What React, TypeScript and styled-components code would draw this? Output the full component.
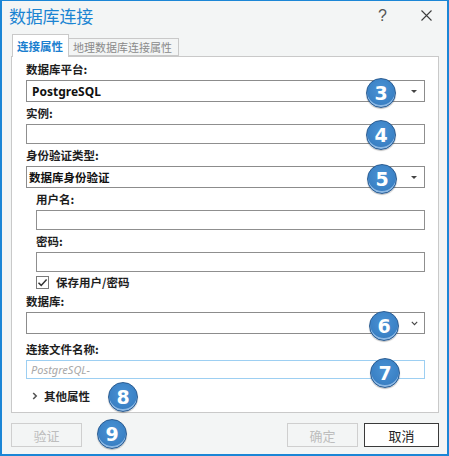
import React from 'react';
import styled, { createGlobalStyle } from 'styled-components';

const GlobalStyle = createGlobalStyle`
  html, body {
    margin: 0;
    padding: 0;
    background: #ffffff;
  }
  * { box-sizing: border-box; }
`

const cjk = `"Noto Sans CJK SC", "Noto Sans", sans-serif`
const latin = `"Noto Sans", "Noto Sans CJK SC", sans-serif`

// numbered callouts drawn over the dialog
const callouts = [
  { n: 3, x: 379, y: 92 },
  { n: 4, x: 379, y: 134 },
  { n: 5, x: 380, y: 178 },
  { n: 6, x: 382, y: 325 },
  { n: 7, x: 383, y: 372 },
  { n: 8, x: 121, y: 396 },
  { n: 9, x: 110, y: 433 },
]

const App = () => {
  return (
    <>
      <GlobalStyle />
      <Window>
        <TitleBar>
          <Title>数据库连接</Title>
          <TitleButtons>
            <Help>?</Help>
            <svg width="11" height="11" viewBox="0 0 11 11">
              <path d="M0.5 0.5 L10.5 10.5 M10.5 0.5 L0.5 10.5" stroke="#3c3c3c" strokeWidth="1.1" fill="none" />
            </svg>
          </TitleButtons>
        </TitleBar>

        <Tabs>
          <Tab $active>连接属性</Tab>
          <Tab>地理数据库连接属性</Tab>
        </Tabs>

        <Panel>
          <Label>数据库平台:</Label>
          <Combo>
            <span className='latin'>PostgreSQL</span>
            <Caret />
          </Combo>

          <Label>实例:</Label>
          <TextField />

          <Label>身份验证类型:</Label>
          <Combo $tight>
            <span>数据库身份验证</span>
            <Caret />
          </Combo>

          <Indent>
            <Label>用户名:</Label>
            <TextField />
            <Label>密码:</Label>
            <TextField />
            <CheckRow>
              <CheckBox>
                <svg width="11" height="11" viewBox="0 0 11 11">
                  <path d="M1.5 5.8 L4.2 8.4 L9.6 2.6" stroke="#333" strokeWidth="1.5" fill="none" />
                </svg>
              </CheckBox>
              <span>保存用户/密码</span>
            </CheckRow>
          </Indent>

          <Label>数据库:</Label>
          <Combo>
            <span />
            <svg width="7" height="5" viewBox="0 0 7 5">
              <path d="M0.8 0.8 L3.5 3.6 L6.2 0.8" stroke="#444" strokeWidth="1.1" fill="none" />
            </svg>
          </Combo>

          <Label $gap={6}>连接文件名称:</Label>
          <TextField $focus placeholder='PostgreSQL-' />

          <More>
            <svg width="6" height="8" viewBox="0 0 6 8">
              <path d="M1.2 1 L4.2 4 L1.2 7" stroke="#555" strokeWidth="1.6" fill="none" />
            </svg>
            <span>其他属性</span>
          </More>
        </Panel>

        <ButtonRow>
          <Button $width={71} disabled>验证</Button>
          <Spacer />
          <Button $width={71} disabled>确定</Button>
          <Button $width={75} $primary>取消</Button>
        </ButtonRow>

        {callouts.map(c => (
          <Badge key={c.n} style={{ left: c.x - 15, top: c.y - 15 }}>{c.n}</Badge>
        ))}
      </Window>
    </>
  )
}

const Window = styled.div`
  position: relative;
  width: 449px;
  height: 456px;
  background: #f3f5f5;
  border: 2px solid #1b86d6;
  border-top-width: 1px;
  display: flex;
  flex-direction: column;
  font-family: ${cjk};
  overflow: hidden;
`
const TitleBar = styled.div`
  height: 33px;
  display: flex;
  align-items: center;
  justify-content: space-between;
  padding: 0 15px 4px 7px;
`
const Title = styled.div`
  font-size: 17px;
  color: #1a84d2;
  letter-spacing: -0.2px;
`
const TitleButtons = styled.div`
  display: flex;
  align-items: center;
  gap: 34px;
  svg { display: block; }
`
const Help = styled.span`
  font-family: "Liberation Sans", sans-serif;
  font-size: 16px;
  color: #555;
`
const Tabs = styled.div`
  display: flex;
  align-items: flex-end;
  height: 22px;
  padding-left: 10px;
  position: relative;
  z-index: 1;
`
const Tab = styled.div<{ $active?: boolean }>`
  height: ${p => (p.$active ? 23 : 18)}px;
  margin-bottom: ${p => (p.$active ? -1 : 0)}px;
  padding: 0 ${p => (p.$active ? 5 : 6)}px 0 4px;
  display: flex;
  align-items: center;
  font-size: ${p => (p.$active ? 11.5 : 11)}px;
  font-weight: ${p => (p.$active ? 700 : 400)};
  color: ${p => (p.$active ? '#1b7fcf' : '#8a8a8a')};
  background: ${p => (p.$active ? '#ffffff' : '#f3f5f5')};
  border: 1px solid #c9c9c9;
  border-bottom: ${p => (p.$active ? 'none' : '1px solid #c9c9c9')};
  & + & { border-left: none; }
`
const Panel = styled.div`
  height: 357px;
  margin: 0 8px 0 9px;
  background: #ffffff;
  border: 1px solid #c9c9c9;
  padding: 1px 13px 0 14px;
  display: flex;
  flex-direction: column;
`
const Label = styled.div<{ $gap?: number }>`
  height: 18px;
  margin: ${p => p.$gap ?? 2}px 0 2px;
  display: flex;
  align-items: center;
  font-size: 11.5px;
  font-weight: 700;
  color: #1e1e1e;
`
const Combo = styled.div<{ $tight?: boolean }>`
  height: 22px;
  border: 1px solid #8c8c8c;
  background: #ffffff;
  display: flex;
  align-items: center;
  justify-content: space-between;
  padding: 0 6px 0 ${p => (p.$tight ? 2 : 5)}px;
  font-size: 11.5px;
  font-weight: 700;
  color: #111;
  .latin {
    font-family: ${latin};
    font-size: 12px;
  }
  svg { display: block; }
`
const Caret = styled.span`
  width: 0;
  height: 0;
  border-left: 3px solid transparent;
  border-right: 3px solid transparent;
  border-top: 3px solid #444;
  margin-right: 1px;
`
const TextField = styled.input<{ $focus?: boolean }>`
  display: block;
  width: 100%;
  height: ${p => (p.$focus ? 19 : 20)}px;
  border: 1px solid ${p => (p.$focus ? '#9dcff2' : '#8f8f8f')};
  background: #ffffff;
  padding: 0 4px;
  margin: 0;
  font-family: ${latin};
  font-size: 11px;
  outline: none;
  &::placeholder {
    color: #a8a8a8;
    font-style: italic;
  }
`
const Indent = styled.div`
  padding-left: 10px;
  display: flex;
  flex-direction: column;
`
const CheckRow = styled.div`
  height: 16px;
  margin-top: 2px;
  display: flex;
  align-items: center;
  gap: 7px;
  font-size: 11.5px;
  font-weight: 700;
  color: #1e1e1e;
`
const CheckBox = styled.span`
  width: 13px;
  height: 13px;
  border: 1px solid #7a7a7a;
  background: #fff;
  display: flex;
  align-items: center;
  justify-content: center;
  svg { display: block; }
`
const More = styled.div`
  height: 22px;
  margin-top: 6px;
  padding-left: 6px;
  display: flex;
  align-items: center;
  gap: 6px;
  font-size: 11.5px;
  font-weight: 700;
  color: #1e1e1e;
  svg { display: block; }
`
const ButtonRow = styled.div`
  display: flex;
  gap: 6px;
  margin: 10px 8px 0 9px;
`
const Spacer = styled.div`
  flex: 1;
`
const Button = styled.button<{ $width: number; $primary?: boolean }>`
  width: ${p => p.$width}px;
  height: 24px;
  padding: 0;
  font-family: ${cjk};
  font-size: 13px;
  color: ${p => (p.$primary ? '#222' : '#bdbdbd')};
  background: ${p => (p.$primary ? '#ffffff' : '#f3f5f5')};
  border: 1px solid ${p => (p.$primary ? '#3a3a3a' : '#cfcfcf')};
  border-radius: 0;
`
const Badge = styled.div`
  position: absolute;
  width: 30px;
  height: 30px;
  border-radius: 50%;
  background: radial-gradient(circle at 50% 38%, #4a92d4 0%, #3b82c6 60%, #346fb0 100%);
  border: 1.5px solid #2a5c92;
  box-shadow: inset 0 -2px 0 rgba(170, 205, 240, 0.75), 0 1px 1px rgba(0, 0, 0, 0.25);
  display: flex;
  align-items: center;
  justify-content: center;
  font-family: "DejaVu Sans", sans-serif;
  font-weight: 700;
  font-size: 19px;
  color: #ffffff;
  line-height: 1;
`

export default App
